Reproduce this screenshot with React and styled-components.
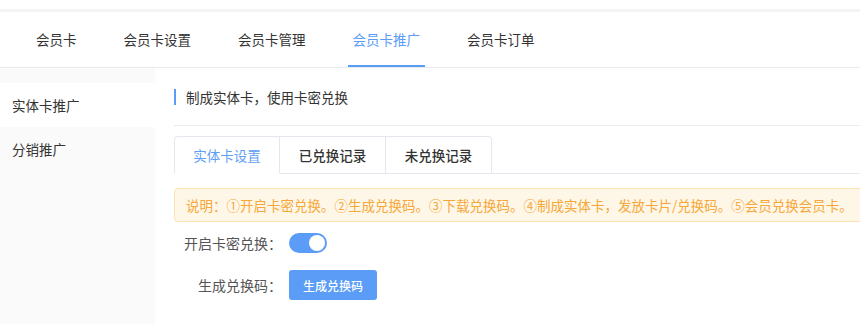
import React from "react";
import styled, { createGlobalStyle } from "styled-components";

const GlobalStyle = createGlobalStyle`
  html, body {
    margin: 0;
    padding: 0;
    background: #ffffff;
    overflow: hidden;
  }
  body {
    font-family: "Noto Sans CJK SC", "Noto Sans", sans-serif;
    color: #333333;
    font-size: 13.5px;
  }
  * { box-sizing: border-box; }
`;

const Page = styled.div`
  display: flex;
  flex-direction: column;
  min-height: 100vh;
`;

const TopStrip = styled.div`
  height: 12px;
  background: #ffffff;
  border-bottom: 3px solid #f4f4f4;
`;

const Nav = styled.nav`
  display: flex;
  align-items: stretch;
  height: 56px;
  padding-left: 31px;
  gap: 37px;
  border-bottom: 1px solid #e9e9e9;
`;

const NavItem = styled.div`
  display: flex;
  align-items: center;
  padding: 0 5px;
  font-size: 13.5px;
  color: ${(p) => (p.$active ? "#5a9cf6" : "#333333")};
  border-bottom: 2px solid ${(p) => (p.$active ? "#5a9cf6" : "transparent")};
`;

const Body = styled.div`
  flex: 1;
  display: flex;
`;

const Sidebar = styled.aside`
  width: 155px;
  flex-shrink: 0;
  background: #fafafa;
  padding-top: 15px;
`;

const SideItem = styled.div`
  height: 44px;
  display: flex;
  align-items: center;
  padding-left: 12px;
  font-size: 13.5px;
  color: #333333;
  background: ${(p) => (p.$active ? "#ffffff" : "transparent")};
`;

const Content = styled.main`
  flex: 1;
  min-width: 0;
  padding-left: 19px;
  padding-top: 19px;
`;

const TitleRow = styled.div`
  display: flex;
  align-items: center;
  gap: 10px;
  height: 20px;
  font-size: 13.5px;
  color: #333333;
`;

const TitleBar = styled.span`
  width: 2px;
  height: 16px;
  background: #5a9cf6;
`;

const Divider = styled.div`
  height: 1px;
  background: #ececec;
  margin-top: 18px;
`;

const Tabs = styled.div`
  display: flex;
  margin-top: 10px;
  border-bottom: 1px solid #e4e7ed;
`;

const Tab = styled.div`
  width: 106px;
  height: 38px;
  display: flex;
  align-items: center;
  justify-content: center;
  font-size: 13.5px;
  font-weight: ${(p) => (p.$active ? 400 : 500)};
  color: ${(p) => (p.$active ? "#5f9ff6" : "#333333")};
  border: 1px solid #e4e7ed;
  border-left-width: ${(p) => (p.$first ? "1px" : "0")};
  border-radius: ${(p) => (p.$first ? "4px 0 0 0" : p.$last ? "0 4px 0 0" : "0")};
  margin-bottom: -1px;
  background: #ffffff;
  border-bottom: 1px solid ${(p) => (p.$active ? "#ffffff" : "#e4e7ed")};
`;

const Notice = styled.div`
  margin-top: 14px;
  margin-right: -20px;
  height: 34px;
  display: flex;
  align-items: center;
  padding-left: 11px;
  background: #fef7e8;
  border: 1px solid #fbe3b4;
  border-radius: 4px;
  color: #f6a73a;
  font-size: 13.5px;
  white-space: nowrap;
`;

const FormRow = styled.div`
  display: flex;
  align-items: center;
  height: ${(p) => p.$h}px;
  margin-top: ${(p) => p.$mt}px;
`;

const Label = styled.label`
  width: 108px;
  margin-right: 7px;
  text-align: right;
  font-size: 14px;
  color: #555555;
`;

const Switch = styled.span`
  position: relative;
  width: 38px;
  height: 20px;
  border-radius: 10px;
  background: #5a9cf6;
  display: inline-block;

  &::after {
    content: "";
    position: absolute;
    top: 2px;
    right: 2px;
    width: 16px;
    height: 16px;
    border-radius: 50%;
    background: #ffffff;
  }
`;

const Button = styled.button`
  height: 30px;
  width: 88px;
  border: none;
  border-radius: 3px;
  background: #5a9cf6;
  color: #ffffff;
  font-family: inherit;
  font-size: 12px;
  font-weight: 500;
  cursor: pointer;
  padding: 0;
`;

const navItems = ["会员卡", "会员卡设置", "会员卡管理", "会员卡推广", "会员卡订单"];
const tabs = ["实体卡设置", "已兑换记录", "未兑换记录"];

export default function App() {
  return (
    <Page>
      <GlobalStyle />
      <TopStrip />
      <Nav>
        {navItems.map((t) => (
          <NavItem key={t} $active={t === "会员卡推广"}>
            {t}
          </NavItem>
        ))}
      </Nav>
      <Body>
        <Sidebar>
          <SideItem $active>实体卡推广</SideItem>
          <SideItem>分销推广</SideItem>
        </Sidebar>
        <Content>
          <TitleRow>
            <TitleBar />
            制成实体卡，使用卡密兑换
          </TitleRow>
          <Divider />
          <Tabs>
            {tabs.map((t, i) => (
              <Tab key={t} $active={i === 0} $first={i === 0} $last={i === tabs.length - 1}>
                {t}
              </Tab>
            ))}
          </Tabs>
          <Notice>
            说明：①开启卡密兑换。②生成兑换码。③下载兑换码。④制成实体卡，发放卡片/兑换码。⑤会员兑换会员卡。
          </Notice>
          <FormRow $h={32} $mt={5}>
            <Label>开启卡密兑换：</Label>
            <Switch />
          </FormRow>
          <FormRow $h={30} $mt={11}>
            <Label>生成兑换码：</Label>
            <Button>生成兑换码</Button>
          </FormRow>
        </Content>
      </Body>
    </Page>
  );
}
